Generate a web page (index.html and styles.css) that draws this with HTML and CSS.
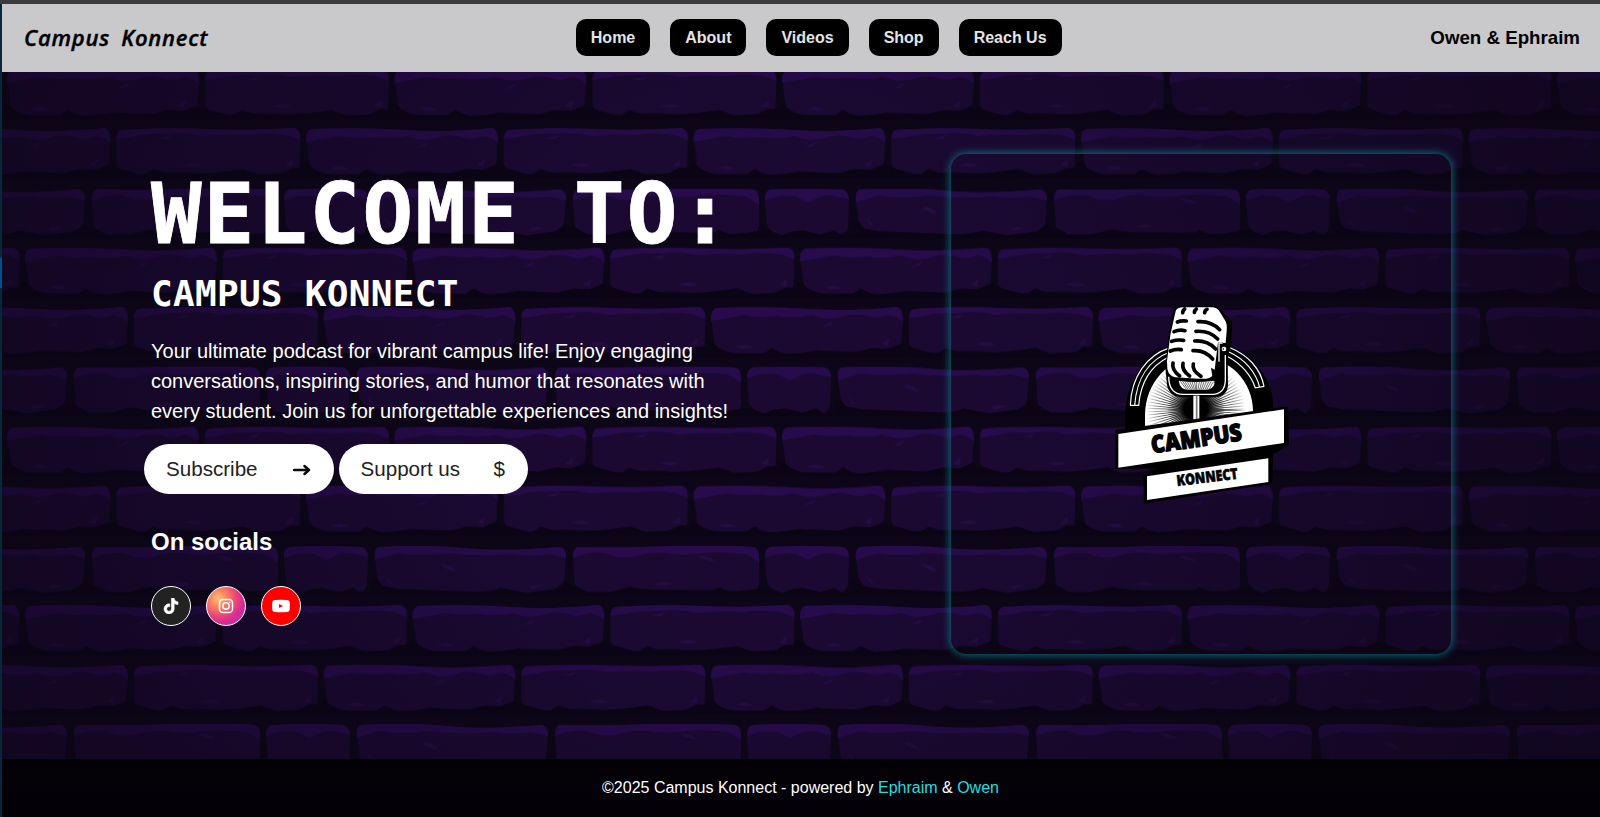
FILE: index.html
```html
<!DOCTYPE html>
<html lang="en">
<head>
<meta charset="utf-8">
<title>Campus Konnect</title>
<link rel="stylesheet" href="styles.css">
</head>
<body>
<div class="page">
  <svg class="wall" viewBox="0 0 1600 817" preserveAspectRatio="none" aria-hidden="true">
    <defs>
      <g id="brick-a">
        <path class="brick" d="M9 1 Q60 -1 100 2 T189 0 Q194 1 195 8 L193 38 Q192 44 186 45 L166 43 L158 46 L128 46 L110 43 L92 46 L60 47 L20 46 Q11 45 7 38 L3 10 Q3 2 9 1Z"/>
        <path class="top" d="M9 1 Q60 -1 100 2 T189 0 Q194 1 195 15 Q190 9 180 8 Q168 13 160 9 Q145 5 134 10 Q118 14 104 8 Q88 12 70 9 Q50 11 36 8 L14 12 L3 14 Q3 2 9 1Z"/>
        <path class="mark" d="M28 40 Q38 36 45 41 Q36 43 28 40Z M113 20 L125 14 L123 18Z M174 37 L182 31 L180 39Z"/>
        <path class="shade" d="M0 34 L6 36 Q10 43 25 46 L46 46 L56 46 L64 41 L72 45 L80 47 L118 44 L148 45 L164 41 L180 42 L194 36 L198 40 L198 50 L0 50Z"/>
      </g>
      <g id="brick-b">
        <path class="brick" d="M206 2 Q250 -1 290 1 T378 0 Q384 1 385 7 L384 38 Q382 45 374 45 L342 46 L324 43 L304 46 L260 44 L230 46 L212 46 Q204 43 201 36 L201 12 Q201 3 206 2Z"/>
        <path class="top" d="M206 2 Q250 -1 290 1 T378 0 Q384 1 385 12 L372 7 Q350 4 334 7 Q310 5 288 8 Q270 3 252 6 Q232 5 216 9 L201 11 Q201 3 206 2Z"/>
        <path class="mark" d="M268 37 Q282 33 287 38 Q276 40 268 37Z M242 11 L256 7 L252 11Z M370 38 L377 31 L377 38Z"/>
        <path class="shade" d="M198 38 L206 41 L224 46 L230 46 L238 41 L246 44 L260 46 L280 46 L306 44 L328 41 L344 47 L366 45 L376 40 L388 40 L388 50 L198 50Z"/>
      </g>
      <g id="brick-c">
        <path class="brick" d="M8 1 Q60 2 100 0 T183 1 Q189 2 189 9 L189 38 Q188 45 180 46 L160 45 L148 43 L100 46 L76 43 L50 46 L16 46 Q8 45 5 38 L3 10 Q3 2 8 1Z"/>
        <path class="top" d="M8 1 Q60 2 100 0 T183 1 Q189 2 189 16 L176 8 Q150 5 132 7 Q112 10 96 7 Q80 5 64 11 Q48 13 36 7 Q20 5 3 12 Q3 2 8 1Z"/>
        <path class="mark" d="M84 38 Q96 34 102 38 Q94 41 84 38Z M128 10 Q140 10 145 15 Q134 15 128 10Z"/>
        <path class="shade" d="M0 38 L7 40 L18 46 L40 46 L60 41 L80 44 L120 44 L142 46 L148 41 L160 46 L180 44 L192 42 L192 50 L0 50Z"/>
        <path class="brick" d="M201 1 Q234 -1 272 1 Q278 2 279 9 L278 38 Q277 44 272 46 L264 43 L256 47 L236 43 L214 47 Q200 45 197 36 L195 10 Q195 2 201 1Z"/>
        <path class="top" d="M201 1 Q234 -1 272 1 Q278 2 279 11 L266 8 Q254 5 246 10 L238 14 L226 8 Q210 5 195 12 Q195 2 201 1Z"/>
        <path class="shade" d="M192 41 L200 42 L212 47 L222 43 L234 42 L250 46 L264 42 L272 47 L282 44 L282 50 L192 50Z"/>
        <path class="brick" d="M290 1 Q334 -2 374 2 T470 1 Q477 2 477 9 L475 34 Q472 43 464 45 L440 47 L416 43 L388 46 L342 45 L310 44 Q294 44 289 34 L286 12 Q285 2 290 1Z"/>
        <path class="top" d="M290 1 Q334 -2 374 2 T470 1 Q477 2 477 12 L460 8 Q440 11 424 8 Q390 11 360 7 Q330 11 308 7 L286 14 Q285 2 290 1Z"/>
        <path class="mark" d="M352 18 Q362 18 367 25 Q356 24 352 18Z M300 37 L297 30 L304 38Z M440 41 Q448 37 454 40 L444 43Z"/>
        <path class="shade" d="M282 33 L288 32 L294 40 L310 43 L340 44 L390 46 L402 45 L412 42 L436 47 L466 43 L476 36 L481 38 L481 50 L282 50Z"/>
      </g>
      <pattern id="course-1" width="387.5" height="59.5" patternUnits="userSpaceOnUse" patternTransform="translate(4 69)"><use href="#brick-a"/><use href="#brick-b"/></pattern>
      <pattern id="course-2" width="387.5" height="59.5" patternUnits="userSpaceOnUse" patternTransform="translate(-84.5 128)"><use href="#brick-a"/><use href="#brick-b"/></pattern>
      <pattern id="course-3" width="481" height="59.5" patternUnits="userSpaceOnUse" patternTransform="translate(89 188.5)"><use href="#brick-c"/></pattern>
      <pattern id="course-4" width="387.5" height="59.5" patternUnits="userSpaceOnUse" patternTransform="translate(22 247.5)"><use href="#brick-a"/><use href="#brick-b"/></pattern>
      <pattern id="course-5" width="387.5" height="59.5" patternUnits="userSpaceOnUse" patternTransform="translate(-67 307)"><use href="#brick-a"/><use href="#brick-b"/></pattern>
      <pattern id="course-6" width="481" height="59.5" patternUnits="userSpaceOnUse" patternTransform="translate(71 366.5)"><use href="#brick-c"/></pattern>
      <g id="courses">
        <rect y="69" width="1600" height="59" fill="url(#course-1)"/>
        <rect y="128" width="1600" height="59" fill="url(#course-2)"/>
        <rect y="188.5" width="1600" height="59" fill="url(#course-3)"/>
        <rect y="247.5" width="1600" height="59" fill="url(#course-4)"/>
        <rect y="307" width="1600" height="59" fill="url(#course-5)"/>
        <rect y="366.5" width="1600" height="59" fill="url(#course-6)"/>
      </g>
    </defs>
    <use href="#courses"/>
    <use href="#courses" transform="translate(0 357.5)"/>
  </svg>
  <div class="vignette"></div>
  <div class="edge"><span class="edge-mark"></span></div>

  <header class="header">
    <div class="brand">Campus Konnect</div>
    <nav class="nav">
      <a class="nav-link">Home</a>
      <a class="nav-link">About</a>
      <a class="nav-link">Videos</a>
      <a class="nav-link">Shop</a>
      <a class="nav-link">Reach Us</a>
    </nav>
    <div class="hosts">Owen &amp; Ephraim</div>
  </header>

  <main class="main">
    <section class="intro">
      <h1 class="title">WELCOME TO:</h1>
      <h2 class="subtitle">CAMPUS KONNECT</h2>
      <p class="lead">Your ultimate podcast for vibrant campus life! Enjoy engaging<br>conversations, inspiring stories, and humor that resonates with<br>every student. Join us for unforgettable experiences and insights!</p>
      <div class="actions">
        <a class="button"><span>Subscribe</span>
          <svg class="arrow" width="18" height="14" viewBox="0 0 18 14"><path d="M1 7H16M11.500 3L16 7L11.500 11" fill="none" stroke="#0a0a0a" stroke-width="2.500" stroke-linecap="round" stroke-linejoin="round"/></svg>
        </a>
        <a class="button"><span>Support us</span><span>$</span></a>
      </div>
      <h3 class="socials-title">On socials</h3>
      <div class="socials">
        <a class="social tiktok"><svg width="16" height="16" viewBox="0 0 448 512"><path fill="#fff" stroke="#fff" stroke-width="18" d="M448 209.900a210 210 0 0 1-122.800-39.300v178.800A162.600 162.600 0 1 1 185 188.300v89.900a74.600 74.600 0 1 0 52.200 71.200V0h88a121 121 0 0 0 1.900 22.200 122 122 0 0 0 53.900 80.200 121 121 0 0 0 67 20.100z"/></svg></a>
        <a class="social instagram"><svg width="16" height="16" viewBox="0 0 16 16" fill="none" stroke="#fff"><rect x="1.500" y="1.500" width="13" height="13" rx="3.400" stroke-width="1.500"/><circle cx="8" cy="8" r="3.200" stroke-width="1.500"/><circle cx="11.800" cy="4.300" r=".8" fill="#fff" stroke="none"/></svg></a>
        <a class="social youtube"><svg width="18" height="14" viewBox="0 0 18 14"><path fill="#fff" fill-rule="evenodd" d="M3 1Q9 .5 15 1Q17.600 1.200 17.800 4V10Q17.600 12.800 15 13Q9 13.400 3 13Q.4 12.800 .2 10V4Q.4 1.200 3 1ZM7 4.900V9.100L11 7Z"/></svg></a>
      </div>
    </section>

    <section class="card">
      <svg class="logo" viewBox="0 0 600 645" role="img" aria-label="Campus Konnect">
        <defs>
          <radialGradient id="core"><stop offset="0" stop-color="#000"/><stop offset=".42" stop-color="#000"/><stop offset="1" stop-color="#000" stop-opacity="0"/></radialGradient>
          <radialGradient id="rays" gradientUnits="userSpaceOnUse" cx="288" cy="345" r="150"><stop offset=".5" stop-color="#000"/><stop offset="1" stop-color="#000" stop-opacity="0"/></radialGradient>
          <clipPath id="disc"><path d="M135 400V360C135 265 206 186 297 186C388 186 459 258 459 350V410Z"/></clipPath>
        </defs>
        <path fill="#000" d="M76 410V360C76 230 175 135 297 135C418 135 520 225 520 338L520 410Z"/>
        <path fill="#fff" d="M135 400V360C135 265 206 186 297 186C388 186 459 258 459 350V410Z"/>
        <g clip-path="url(#disc)">
          <circle cx="288" cy="345" r="75" fill="none" stroke="url(#rays)" stroke-width="150" stroke-dasharray="1.850 3.386"/>
          <ellipse cx="288" cy="340" rx="88" ry="80" fill="url(#core)"/>
        </g>
        <g fill="none" stroke="#fff" stroke-width="3.500">
          <path d="M91 331C94 245 140 181 210 158M104 331C110 249 148 194 210 171M116 331C122 260 154 212 206 186M90 331H118"/>
          <path d="M390 158C445 180 482 222 492 274M387 171C434 192 468 232 479 277M384 185C422 205 453 240 466 279M464 279L493 274"/>
        </g>
        <path fill="#000" d="M218 48Q228 32 252 31L338 32Q360 36 376 60L396 82L394 148L383 185L384 270Q382 304 345 307H245Q201 304 200 258L196 218L205 130Z"/>
        <path fill="#fff" d="M227 48Q231 37 250 37L335 37Q352 37 361 53L375 76Q382 86 380 108L377 144H364L354 210Q350 238 330 248Q316 253 295 251L226 247Q205 242 202 221L201 198L211 120Z"/>
        <path fill="none" stroke="#000" stroke-width="11" stroke-linecap="round" d="M254 42Q249 46 248 53M289 42Q284 46 283 52M321 43Q314 46 314 53M232 81Q243 76 259 78M222 110Q238 103 255 107M215 139Q232 133 251 136M211 168Q228 161 244 164M294 80Q333 77 359 104M288 109Q328 106 353 132M284 138Q323 136 347 162M279 167Q314 164 338 192M219 204Q214 224 239 243M249 205Q244 225 269 243M280 207Q275 226 303 244"/>
        <path fill="#000" d="M354 142H369V221L347 250L326 251L337 244L333 218L344 224Z"/>
        <path fill="none" stroke="#fff" stroke-width="4" d="M206 245Q207 298 250 298H337Q374 297 376 257V180M357 144V200M355 144H368"/>
        <path fill="#fff" d="M236 257Q282 265 343 257V267Q340 283 318 284H265Q240 284 236 257Z"/>
        <path fill="none" stroke="#111" stroke-width="1.800" d="M241 259L260 284M248 259L265 284M255 260L270 284M262 260L275 284M269 260L280 284M276 260L284 284M283 260L288 284M290 260V284M298 260L294 284M305 260L299 284M312 260L304 284M319 260L309 284M326 260L315 284M333 260L320 284M340 260L327 284"/>
        <circle cx="372" cy="162" r="7" fill="#fff"/><circle cx="370" cy="162" r="2.500" fill="#000"/>
        <path fill="#000" d="M273 301H304V382H273Z"/><path fill="#fff" d="M280 302H298V381H280Z"/><path stroke="#777" stroke-width="5" d="M290 302V378"/>
        <path fill="#000" d="M46 405L564 334L567 450L520 478L516 566L132 626L130 541L175 520L47 522Z"/>
        <path fill="#fff" d="M55 417L552 343V444L55 518Z"/>
        <path fill="#fff" d="M141 544L505 490V561L141 615Z"/>
        <text class="logo-main" transform="translate(157 475) rotate(-8.200)" textLength="274" lengthAdjust="spacingAndGlyphs">CAMPUS</text>
        <text class="logo-sub" transform="translate(232 573) rotate(-7)" textLength="184" lengthAdjust="spacingAndGlyphs">KONNECT</text>
      </svg>
    </section>
  </main>

  <footer class="footer"><p class="copyright">©2025 Campus Konnect - powered by <a class="credit">Ephraim</a> &amp; <a class="credit">Owen</a></p></footer>
</div>
</body>
</html>
```
FILE: styles.css
```css
* { box-sizing: border-box; }

body {
  margin: 0;
  background: #0d0618;
  color: #fff;
  font-family: "Liberation Sans", Arial, sans-serif;
}

h1, h2, h3, p { margin: 0; }

.page {
  position: relative;
  display: flex;
  flex-direction: column;
  height: 817px;
  overflow: hidden;
  border-top: 4px solid #3c3b3e;
}

/* Decorative brick wall behind the content */
.wall { position: absolute; left: 0; top: -4px; width: 1600px; height: 817px; }
.brick { fill: #1b0932; }
.top { fill: #270b4c; }
.mark { fill: #240c44; }
.shade { fill: #0a0414; }
.vignette {
  position: absolute;
  inset: 0;
  background: radial-gradient(ellipse 900px 900px at 760px 400px, rgba(10, 5, 20, 0) 25%, rgba(10, 5, 20, .6) 100%);
}
.edge { position: absolute; z-index: 2; left: 0; top: -4px; width: 2px; height: 817px; background: #07283a; }
.edge-mark { display: block; width: 2px; height: 30px; margin-top: 258px; background: #00508c; }

.header {
  position: relative;
  display: flex;
  align-items: center;
  justify-content: space-between;
  flex: none;
  height: 68px;
  padding: 0 20px 2px 24px;
  background: #c9c8cb;
  color: #000;
}
.brand {
  width: 183px;
  font: italic 600 22px/30px "Open Sans", sans-serif;
  word-spacing: 5px;
  letter-spacing: .75px;
  white-space: nowrap;
  -webkit-text-stroke: .4px #000;
}
.nav { display: flex; gap: 20px; }
.nav-link {
  padding: 10px 15px 9px;
  border-radius: 10px;
  background: #000;
  color: #e4e4e4;
  font-size: 16px;
  font-weight: 700;
  line-height: 18px;
}
.hosts { padding-top: 2px; font-size: 18.720px; font-weight: 700; }

.main {
  position: relative;
  display: flex;
  justify-content: space-between;
  flex: 1;
  padding: 82px 149px 0 151px;
}
.title {
  font: 700 84px/98px "DejaVu Sans Mono", monospace;
  letter-spacing: 2.3px;
  margin-top: 11px;
  -webkit-text-stroke: .8px #fff;
}
.subtitle {
  margin-top: 10px;
  font: 700 36px/42px "DejaVu Sans Mono", monospace;
  letter-spacing: .3px;
}
.lead { margin-top: 21px; font-size: 20px; line-height: 30px; white-space: nowrap; }
.actions { display: flex; gap: 5px; margin: 18px 0 0 -7px; }
.button {
  display: flex;
  align-items: center;
  justify-content: space-between;
  width: 189.500px;
  height: 50px;
  padding: 0 23px 0 22px;
  border-radius: 25px;
  background: #fff;
  color: #222;
  font-size: 20.600px;
}
.arrow { margin-top: 2px; }
.socials-title { margin-top: 34px; font-size: 24px; line-height: 28px; }
.socials { display: flex; gap: 15px; margin-top: 30px; }
.social {
  display: flex;
  align-items: center;
  justify-content: center;
  width: 40px;
  height: 40px;
  border: 1px solid #fff;
  border-radius: 50%;
}
.tiktok { background: #222; }
.instagram { background: radial-gradient(circle at 30% 30%, #fdc17a 0%, #fb8560 22%, #e8407a 50%, #d62b96 66%, #8b3fd0 100%); }
.youtube { background: #f00; }

.card {
  display: flex;
  align-items: center;
  justify-content: center;
  width: 500px;
  height: 500px;
  border-radius: 15px;
  box-shadow: 0 0 10px #0c8792;
}
.logo { width: 200px; height: 215px; margin: -4px 0 0 -2px; }
.logo-main, .logo-sub { font-family: "Open Sans", sans-serif; font-weight: 800; fill: #000; stroke: #000; stroke-linejoin: round; }
.logo-main { font-size: 72px; stroke-width: 4px; }
.logo-sub { font-size: 45px; stroke-width: 2px; }

.footer {
  position: relative;
  display: flex;
  justify-content: center;
  flex: none;
  height: 58px;
  padding: 20px 0 0 1px;
  background: linear-gradient(#040106, #030008);
}
.copyright { font-size: 16px; line-height: 18px; }
.credit { color: #1edfe0; }
```
